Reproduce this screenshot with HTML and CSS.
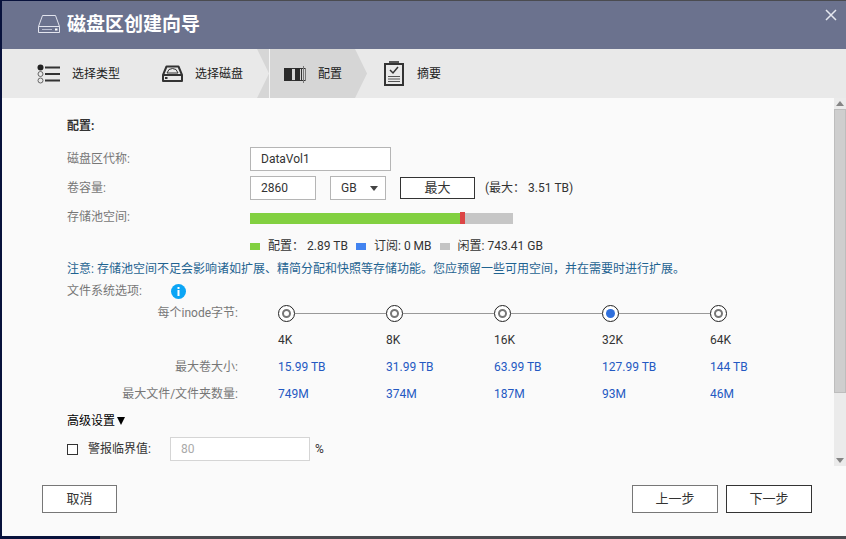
FILE: index.html
```html
<!DOCTYPE html>
<html lang="zh-CN">
<head>
  <meta charset="UTF-8" />
  <title>磁盘区创建向导</title>
  <link rel="stylesheet" href="styles.css">
</head>
<body>

<div class="dialog">
  <header class="title-bar">
    <svg class="title-icon" width="24" height="20" viewBox="0 0 24 20" fill="none" stroke="#e2e4ee" stroke-width="1">
      <path d="M1.500 12.500 L5.500 1.500 H18.500 L22.500 12.500 M1.500 12.500 H22.500 V18.500 H1.500 Z" />
      <path d="M5 15.500 H15" stroke="#b9bdd0" />
      <path d="M18 15.500 H20.500" stroke="#fff" stroke-width="2" />
    </svg>
    <h1>磁盘区创建向导</h1>
    <button class="close" aria-label="关闭">
      <svg width="12" height="12" viewBox="0 0 12 12" stroke="#e6e8f0" stroke-width="1.500">
        <path d="M1 1 L11 11 M11 1 L1 11" />
      </svg>
    </button>
  </header>

  <ol class="steps">
    <li class="step">
      <svg width="24" height="20" viewBox="0 0 24 20" fill="none" stroke="#333">
        <circle cx="3.500" cy="3.500" r="3" fill="#222" stroke="none" />
        <circle cx="3.500" cy="10" r="2.500" stroke="#666" />
        <circle cx="3.500" cy="16.500" r="2.500" stroke="#666" />
        <path d="M8 3.500 H23 M8 10 H23 M8 16.500 H23" stroke-width="2" />
      </svg>
      <span>选择类型</span>
    </li>
    <li class="step">
      <svg width="22" height="20" viewBox="0 0 22 20" fill="none" stroke="#333" stroke-width="2">
        <path d="M1 11 L4.500 2.500 H16.500 L20 11 V17 H1 Z M1 11 H20" stroke-linejoin="round" />
        <path d="M5 9 L7 5.500 Q10.500 3.500 14 5.500 L16 9 Z" stroke-width="1" />
        <path d="M3 14 H5.500" />
      </svg>
      <span>选择磁盘</span>
    </li>
    <li class="step active">
      <svg width="24" height="18" viewBox="0 0 24 18" fill="none" stroke="#333">
        <rect x="1" y="3" width="8" height="13" fill="#2b2b2b" stroke="none" />
        <path d="M8 3.500 H23 M8 15.500 H23" />
        <rect x="12" y="3" width="5" height="13" fill="#2b2b2b" stroke="none" />
        <path d="M18.500 3 V16" />
        <path d="M20.500 1 V18 M22.500 3 V16" stroke="#777" />
      </svg>
      <span>配置</span>
    </li>
    <li class="step">
      <svg width="20" height="25" viewBox="0 0 20 25" fill="none" stroke="#333">
        <path d="M5 1 H15" stroke="#555" stroke-width="2" />
        <rect x="1" y="3" width="18" height="21" stroke-width="2" />
        <path d="M6 9 L9 12 L14 6" stroke-width="1.500" />
        <path d="M4 15.500 H16 M4 18 H16 M4 20.500 H16" stroke="#555" />
      </svg>
      <span>摘要</span>
    </li>
  </ol>

  <div class="body">
    <form class="content" id="config">
      <h2>配置:</h2>

      <div class="fields">
        <label for="alias">磁盘区代称:</label>
        <div class="field"><input class="box alias" type="text" id="alias" value="DataVol1"></div>

        <label for="capacity">卷容量:</label>
        <div class="field capacity-field">
          <input class="box capacity" type="text" id="capacity" value="2860">
          <span class="unit">
            <select class="box" aria-label="单位">
              <option>GB</option>
              <option>TB</option>
            </select>
          </span>
          <button class="btn max" type="button">最大</button>
          <span class="max-note">(最大： 3.51 TB)</span>
        </div>

        <span class="label">存储池空间:</span>
        <div class="field">
          <div class="pool">
            <div class="pool-used"></div>
            <div class="pool-mark"></div>
          </div>
        </div>

        <ul class="legend">
          <li class="green">配置： 2.89 TB</li>
          <li class="blue">订阅: 0 MB</li>
          <li class="grey">闲置: 743.41 GB</li>
        </ul>
      </div>

      <p class="note">注意: 存储池空间不足会影响诸如扩展、精简分配和快照等存储功能。您应预留一些可用空间，并在需要时进行扩展。</p>

      <div class="fs-title">
        <span>文件系统选项:</span>
        <svg width="15" height="15" viewBox="0 0 15 15">
          <circle cx="7.500" cy="7.500" r="7.500" fill="#0ba5f5" />
          <path d="M7.500 3 V5 M7.500 6 V12" stroke="#fff" stroke-width="2" />
        </svg>
      </div>

      <table class="inode">
        <tr class="stops">
          <th scope="row">每个inode字节:</th>
          <td><div class="stop"><input type="radio" name="inode" id="i4"></div></td>
          <td><div class="stop"><input type="radio" name="inode" id="i8"></div></td>
          <td><div class="stop"><input type="radio" name="inode" id="i16"></div></td>
          <td><div class="stop"><input type="radio" name="inode" id="i32" checked></div></td>
          <td><div class="stop"><input type="radio" name="inode" id="i64"></div></td>
        </tr>
        <tr>
          <td></td>
          <td><label for="i4">4K</label></td>
          <td><label for="i8">8K</label></td>
          <td><label for="i16">16K</label></td>
          <td><label for="i32">32K</label></td>
          <td><label for="i64">64K</label></td>
        </tr>
        <tr class="values">
          <th scope="row">最大卷大小:</th>
          <td>15.99 TB</td>
          <td>31.99 TB</td>
          <td>63.99 TB</td>
          <td>127.99 TB</td>
          <td>144 TB</td>
        </tr>
        <tr class="values">
          <th scope="row">最大文件/文件夹数量:</th>
          <td>749M</td>
          <td>374M</td>
          <td>187M</td>
          <td>93M</td>
          <td>46M</td>
        </tr>
      </table>

      <button class="advanced" type="button">高级设置<svg width="8" height="8" viewBox="0 0 8 8"><path d="M0 0 H8 L4 8 Z" /></svg></button>

      <div class="threshold">
        <input type="checkbox" id="alert">
        <label for="alert">警报临界值:</label>
        <input class="box" type="text" value="80" aria-label="警报临界值" disabled>
        <span>%</span>
      </div>
    </form>

    <div class="scrollbar">
      <button aria-label="向上滚动"><svg width="8" height="5" viewBox="0 0 8 5"><path d="M0 5 L4 0 L8 5 Z" fill="#858585" /></svg></button>
      <div class="track"><div class="thumb"></div></div>
      <button aria-label="向下滚动"><svg width="8" height="5" viewBox="0 0 8 5"><path d="M0 0 L4 5 L8 0 Z" fill="#858585" /></svg></button>
    </div>
  </div>

  <footer class="actions">
    <button class="btn cancel">取消</button>
    <button class="btn">上一步</button>
    <button class="btn next">下一步</button>
  </footer>
</div>

</body>
</html>
```

FILE: styles.css
```css
* {
  box-sizing: border-box;
}

body {
  margin: 0;
  height: 100vh;
  padding: 1px 0 3px 2px;
  font-family: Roboto, "Noto Sans CJK SC", sans-serif;
  font-size: 12px;
  line-height: 18px;
  color: #333;
  background: linear-gradient(to right, #08123c 100px, #4a4b50 100px);
}

h1, h2, p, ul, ol {
  margin: 0;
  padding: 0;
  list-style: none;
}

button, input, select {
  font: inherit;
  color: inherit;
  margin: 0;
}

svg {
  display: block;
  flex: none;
}

.dialog {
  display: flex;
  flex-direction: column;
  height: 100%;
  background: #fafafa;
}

/* title */
.title-bar {
  display: flex;
  align-items: center;
  gap: 6px;
  height: 48px;
  flex: none;
  padding: 0 9px 0 35px;
  background: #6b728e;
}

.title-icon {
  margin-bottom: 3px;
}

.title-bar h1 {
  flex: 1;
  font-size: 19px;
  line-height: 28px;
  color: #fff;
}

.close {
  align-self: flex-start;
  margin-top: 8px;
  padding: 0;
  border: none;
  background: none;
  cursor: pointer;
}

/* wizard steps */
.steps {
  display: flex;
  height: 49px;
  flex: none;
  background: #e9e9e9;
}

.step {
  display: flex;
  align-items: center;
  gap: 11px;
  padding: 0 7px 0 35px;
  color: #222;
}

.step + .step {
  padding: 0 14px 0 35px;
}

.step.active {
  padding: 0 25px 0 26px;
  background: linear-gradient(to right, #d6d6d6 12px, #f4f4f4 12px, #f4f4f4 13px, #d6d6d6 13px);
  clip-path: polygon(0 0, calc(100% - 12px) 0, 100% 50%, calc(100% - 12px) 100%, 0 100%, 12px 50%);
}

.step.active + .step {
  padding-left: 17px;
  gap: 13px;
}

/* content */
.body {
  display: flex;
  flex: 1;
  min-height: 0;
}

.content {
  flex: 1;
  padding: 19px 0 0 65px;
  overflow: hidden;
}

.content h2 {
  font-size: 12px;
  margin-bottom: 12px;
}

.fields {
  display: grid;
  grid-template-columns: 183px 1fr;
  grid-auto-rows: 24px;
  gap: 5px 0;
  align-items: center;
}

.fields > label,
.label,
.fs-title {
  color: #777;
}

.field {
  display: flex;
  align-items: center;
}

.capacity-field {
  gap: 14px;
}

.box {
  height: 24px;
  padding: 0 10px;
  border: 1px solid #b5b5b5;
  border-radius: 0;
  background: #fff;
}

.alias {
  width: 141px;
}

.capacity {
  width: 66px;
}

.unit {
  position: relative;
}

.unit select {
  display: block;
  width: 56px;
  appearance: none;
}

.unit::after {
  content: "";
  position: absolute;
  top: 10px;
  right: 8px;
  border: 4px solid transparent;
  border-top: 5px solid #444;
  border-bottom: none;
  pointer-events: none;
}

.btn {
  width: 86px;
  height: 28px;
  padding: 0;
  font-size: 13px;
  border: 1px solid #777;
  background: #fff;
  cursor: pointer;
}

.btn.max {
  width: 75px;
  height: 22px;
  line-height: 18px;
  border-color: #333;
}

.max-note {
  margin-left: -4px;
}

.pool {
  display: flex;
  align-items: flex-end;
  width: 263px;
  height: 11px;
  margin-top: 2px;
  background: #c6c6c6;
}

.pool-used {
  width: 80%;
  height: 11px;
  background: #82d040;
}

.pool-mark {
  width: 5px;
  height: 12px;
  background: #dc4545;
}

.legend {
  grid-column: 2;
  display: flex;
  gap: 8px;
}

.legend li {
  display: flex;
  align-items: center;
  gap: 8px;
}

.legend li::before {
  content: "";
  width: 10px;
  height: 7px;
  background: #c4c4c4;
}

.legend .green::before {
  background: #82d040;
}

.legend .blue::before {
  background: #4283f0;
}

.note {
  margin: 2px 0 4px;
  color: #1f6391;
}

.fs-title {
  display: flex;
  align-items: center;
  gap: 29px;
}

/* inode options */
.inode {
  border-collapse: collapse;
  table-layout: fixed;
  width: 751px;
}

.inode tr {
  height: 27px;
}

.inode .stops {
  height: 26px;
}

.inode th {
  width: 211px;
  padding: 0 40px 0 0;
  font-weight: normal;
  text-align: right;
  color: #777;
}

.inode td {
  padding: 0;
}

.inode .values td {
  color: #2459c2;
}

.stop {
  display: flex;
  align-items: center;
}

.stop::after {
  content: "";
  flex: 1;
  height: 1px;
  background: #999;
}

td:last-child .stop::after {
  display: none;
}

.stop input {
  appearance: none;
  display: grid;
  place-items: center;
  width: 17px;
  height: 17px;
  border: 1px solid #222;
  border-radius: 50%;
  background: #fff;
}

.stop input::before {
  content: "";
  box-sizing: border-box;
  width: 9px;
  height: 9px;
  border: 2px solid #777;
  border-radius: 50%;
}

.stop input:checked::before {
  border: none;
  background: #2f6fdc;
}

/* advanced settings */
.advanced {
  display: flex;
  align-items: center;
  gap: 2px;
  margin: 5px 0 7px;
  padding: 0;
  border: none;
  background: none;
  color: #000;
}

.threshold {
  display: flex;
  align-items: center;
  gap: 10px;
}

.threshold label {
  width: 72px;
}

.threshold input[type="checkbox"] {
  appearance: none;
  width: 11px;
  height: 11px;
  border: 1px solid #333;
  background: #fff;
}

.threshold .box {
  width: 140px;
  border-color: #d5d5d5;
  color: #aaa;
}

.threshold span {
  margin-left: -5px;
}

/* scrollbar */
.scrollbar {
  display: flex;
  flex-direction: column;
  width: 12px;
  background: #ebebeb;
}

.scrollbar button {
  display: grid;
  place-items: center;
  height: 11px;
  padding: 0;
  border: none;
  background: none;
}

.track {
  flex: 1;
}

.thumb {
  height: 82%;
  background: #cecece;
  border: 1px solid #bdbdbd;
}

/* footer */
.actions {
  display: flex;
  gap: 8px;
  flex: none;
  padding: 19px 34px 23px 40px;
}

.actions .cancel {
  width: 75px;
  margin-right: auto;
}

.actions .next {
  border-color: #333;
}
```
